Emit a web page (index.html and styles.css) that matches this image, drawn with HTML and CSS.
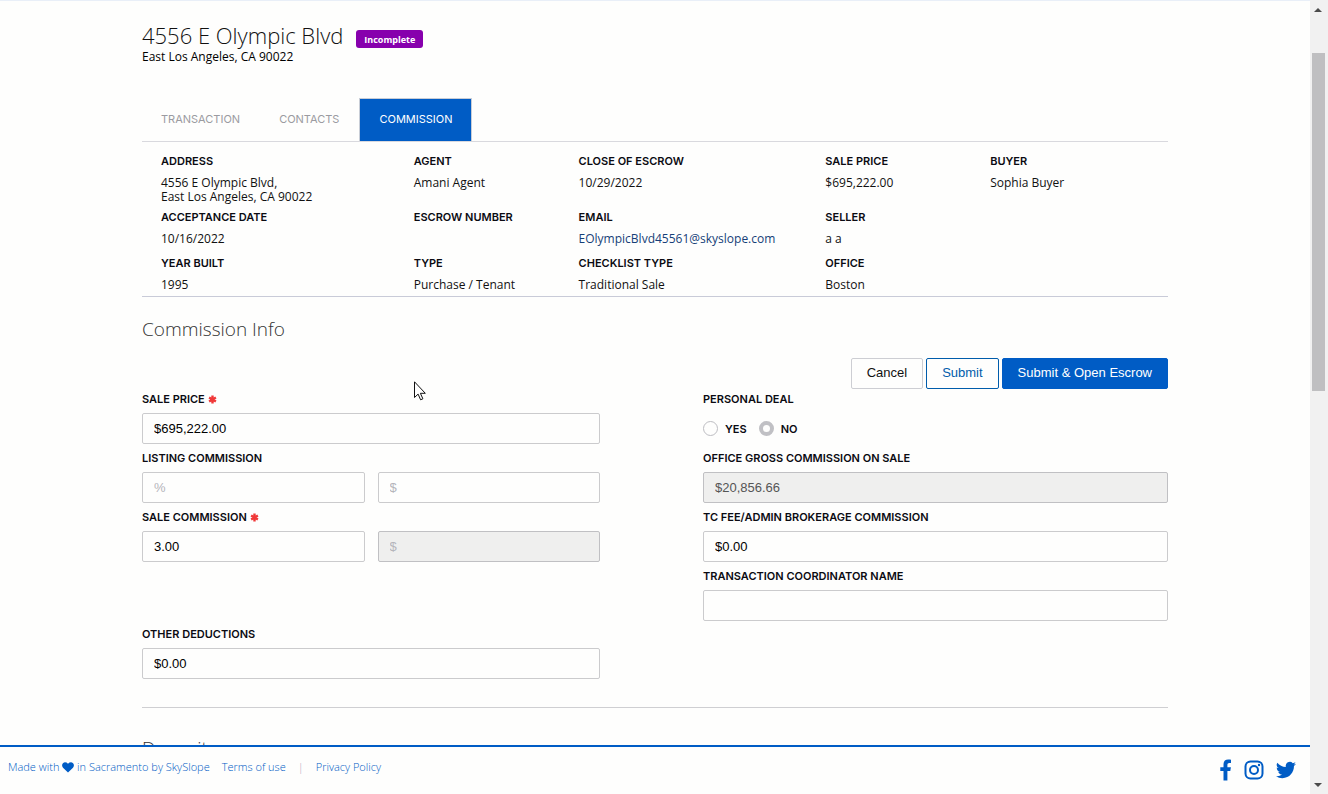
FILE: index.html
```html
<!DOCTYPE html>
<html lang="en">
<head>
<meta charset="utf-8">
<title>4556 E Olympic Blvd - Commission</title>
<link rel="stylesheet" href="styles.css">
</head>
<body>
<div class="app">
  <div class="pane">
    <main class="content">
      <div class="container">
        <header class="property">
          <div class="property-row">
            <h1 class="property-title">4556 E Olympic Blvd</h1>
            <span class="badge">Incomplete</span>
          </div>
          <p class="property-city">East Los Angeles, CA 90022</p>
        </header>
        <nav class="tabs">
          <a class="tab" href="#transaction">TRANSACTION</a>
          <a class="tab" href="#contacts">CONTACTS</a>
          <a class="tab tab-active" href="#commission">COMMISSION</a>
        </nav>
        <dl class="info">
          <div class="info-item"><dt>ADDRESS</dt><dd>4556 E Olympic Blvd,<br>East Los Angeles, CA 90022</dd></div>
          <div class="info-item"><dt>AGENT</dt><dd>Amani Agent</dd></div>
          <div class="info-item"><dt>CLOSE OF ESCROW</dt><dd>10/29/2022</dd></div>
          <div class="info-item"><dt>SALE PRICE</dt><dd>$695,222.00</dd></div>
          <div class="info-item"><dt>BUYER</dt><dd>Sophia Buyer</dd></div>
          <div class="info-item info-first"><dt>ACCEPTANCE DATE</dt><dd>10/16/2022</dd></div>
          <div class="info-item"><dt>ESCROW NUMBER</dt><dd></dd></div>
          <div class="info-item"><dt>EMAIL</dt><dd><a class="email" href="mailto:EOlympicBlvd45561@skyslope.com">EOlympicBlvd45561@skyslope.com</a></dd></div>
          <div class="info-item"><dt>SELLER</dt><dd>a a</dd></div>
          <div class="info-item info-first"><dt>YEAR BUILT</dt><dd>1995</dd></div>
          <div class="info-item"><dt>TYPE</dt><dd>Purchase / Tenant</dd></div>
          <div class="info-item"><dt>CHECKLIST TYPE</dt><dd>Traditional Sale</dd></div>
          <div class="info-item"><dt>OFFICE</dt><dd>Boston</dd></div>
        </dl>
        <h2 class="section-title">Commission Info</h2>
        <form>
          <div class="actions">
            <button class="btn" type="button">Cancel</button>
            <button class="btn btn-outline" type="button">Submit</button>
            <button class="btn btn-primary" type="submit">Submit &amp; Open Escrow</button>
          </div>
          <div class="columns">
            <div class="column">
              <div class="field">
                <label class="label" for="price">SALE PRICE <svg class="required" viewBox="0 0 9 9" aria-hidden="true"><path d="M4.500 0.600v7.800M1.100 2.500l6.800 4M7.900 2.500l-6.800 4"/></svg></label>
                <input class="input" id="price" type="text" value="$695,222.00">
              </div>
              <div class="field">
                <label class="label" for="listing">LISTING COMMISSION</label>
                <div class="pair">
                  <input class="input" id="listing" type="text" placeholder="%">
                  <input class="input" type="text" placeholder="$" aria-label="Listing commission amount">
                </div>
              </div>
              <div class="field">
                <label class="label" for="sale">SALE COMMISSION <svg class="required" viewBox="0 0 9 9" aria-hidden="true"><path d="M4.500 0.600v7.800M1.100 2.500l6.800 4M7.900 2.500l-6.800 4"/></svg></label>
                <div class="pair">
                  <input class="input" id="sale" type="text" value="3.00">
                  <input class="input" type="text" placeholder="$" aria-label="Sale commission amount" disabled>
                </div>
              </div>
              <div class="field field-last">
                <label class="label" for="deductions">OTHER DEDUCTIONS</label>
                <input class="input" id="deductions" type="text" value="$0.00">
              </div>
            </div>
            <div class="column">
              <fieldset class="field">
                <legend class="label">PERSONAL DEAL</legend>
                <div class="radios">
                  <label class="radio"><input type="radio" name="personal">YES</label>
                  <label class="radio"><input type="radio" name="personal" checked>NO</label>
                </div>
              </fieldset>
              <div class="field">
                <label class="label" for="gross">OFFICE GROSS COMMISSION ON SALE</label>
                <input class="input" id="gross" type="text" value="$20,856.66" disabled>
              </div>
              <div class="field">
                <label class="label" for="fee">TC FEE/ADMIN BROKERAGE COMMISSION</label>
                <input class="input" id="fee" type="text" value="$0.00">
              </div>
              <div class="field">
                <label class="label" for="coordinator">TRANSACTION COORDINATOR NAME</label>
                <input class="input" id="coordinator" type="text">
              </div>
            </div>
          </div>
        </form>
        <hr class="rule">
        <h2 class="section-title">Deposit</h2>
      </div>
    </main>
    <footer class="footer">
      <div class="footer-links">
        <span class="made">Made with <svg class="heart" viewBox="0 0 12 11" aria-label="love"><path d="M6 10.600L1 5.700C-.3 4.300-.2 2 1.200.9 2.600-.1 4.500.2 6 1.800 7.500.2 9.400-.1 10.800.9c1.400 1.100 1.500 3.400.2 4.800z"/></svg> in Sacramento by SkySlope</span>
        <a href="#terms">Terms of use</a>
        <span class="bar">|</span>
        <a href="#privacy">Privacy Policy</a>
      </div>
      <div class="social">
        <a href="#facebook" aria-label="Facebook"><svg width="12" height="22" viewBox="0 0 12 22"><path fill="currentColor" d="M3.500 21.500V12H.3V8.300h3.200V5.500C3.500 2.300 5.300.6 8.200.6c1.400 0 2.800.2 2.800.2V4H9.400C7.900 4 7.400 4.900 7.400 5.900v2.400h3.500l-.6 3.700H7.400v9.500z"/></svg></a>
        <a href="#instagram" aria-label="Instagram"><svg width="20" height="20" viewBox="0 0 20 20" fill="none" stroke="currentColor" stroke-width="2"><rect x="1.500" y="1.500" width="17" height="17" rx="5"/><circle cx="10" cy="10" r="4"/><circle cx="15" cy="5" r="1.200" fill="currentColor" stroke="none"/></svg></a>
        <a href="#twitter" aria-label="Twitter"><svg width="20" height="20" viewBox="0 0 24 24"><path fill="currentColor" d="M23.950 4.570a10 10 0 0 1-2.820.77 4.960 4.960 0 0 0 2.160-2.720c-.95.550-2 .950-3.130 1.180a4.920 4.920 0 0 0-8.380 4.480C7.690 8.090 4.070 6.130 1.640 3.160a4.920 4.920 0 0 0 1.520 6.570 4.900 4.900 0 0 1-2.230-.61v.06a4.920 4.920 0 0 0 3.950 4.830 4.900 4.900 0 0 1-2.210.080 4.940 4.940 0 0 0 4.600 3.420A9.870 9.870 0 0 1 0 19.540a13.990 13.990 0 0 0 7.550 2.210c9.050 0 14-7.500 14-13.980 0-.21 0-.42-.020-.63a9.940 9.940 0 0 0 2.460-2.550z"/></svg></a>
      </div>
    </footer>
  </div>
  <div class="scrollbar" aria-hidden="true">
    <svg class="arrow" viewBox="0 0 8 4"><path d="M0 4l4-4 4 4z"/></svg>
    <div class="track"><div class="thumb"></div></div>
    <svg class="arrow" viewBox="0 0 8 4"><path d="M0 0l4 4 4-4z"/></svg>
  </div>
</div>
<svg class="pointer" viewBox="0 0 12 20" aria-hidden="true"><path d="M.5.8v15.700l3.600-3.400 2.500 5.700 2.300-1-2.500-5.500h4.900z"/></svg>
</body>
</html>
```
FILE: styles.css
```css
* {
  box-sizing: border-box;
}

body {
  margin: 0;
  background: #fefefd;
  color: #111;
  font-family: "Open Sans", "Noto Sans", sans-serif;
  font-size: 12px;
  line-height: 14px;
}

h1, h2, p, dl, dd {
  margin: 0;
}

a {
  color: inherit;
  text-decoration: none;
}

.app {
  display: flex;
  height: 100vh;
  overflow: hidden;
}

.pane {
  flex: 1;
  min-width: 0;
  display: flex;
  flex-direction: column;
}

.content {
  flex: 1;
  min-height: 0;
  overflow: hidden;
  border-top: 1px solid #e9eff8;
}

.container {
  max-width: 1026px;
  margin: 0 auto;
}

.property {
  padding-top: 21px;
}

.property-row {
  display: flex;
  align-items: center;
  gap: 13px;
}

.property-title {
  font-size: 22px;
  font-weight: 300;
  line-height: 26px;
}

.badge {
  margin-top: 8px;
  padding: 3px 8px 1px;
  border-radius: 3px;
  background: #8700ad;
  color: #fff;
  font-size: 9px;
  font-weight: 700;
}

.property-city {
  margin-top: 2px;
  color: #000;
}

.tabs {
  display: flex;
  gap: 1px;
  margin-top: 34px;
  border-bottom: 1px solid #d9d9de;
}

.tab {
  padding: 14px 19px 15px;
  color: #9b9ba1;
  font-family: Inter, sans-serif;
  font-size: 11px;
}

.tab-active {
  padding: 13px 19px 15px;
  border: 1px solid #c8cdd6;
  border-bottom: 0;
  background: #005cc5;
  color: #fff;
}

.info {
  display: grid;
  grid-template-columns: 253fr 165fr 247fr 165fr 178fr;
  row-gap: 6px;
  padding: 12px 0 0 19px;
  border-bottom: 1px solid #c9cbd8;
}

.info-item {
  min-width: 0;
}

.info-first {
  grid-column-start: 1;
}

.info dt,
.label,
.radio {
  color: #0b0b12;
  font-family: Inter, sans-serif;
  font-size: 11px;
  font-weight: 600;
  line-height: 14px;
}

.info dd {
  min-height: 18px;
  margin-top: 8px;
}

.email {
  color: #163f78;
}

.section-title {
  margin-top: 19px;
  color: #333;
  font-size: 19px;
  font-weight: 300;
  line-height: 26px;
}

.actions {
  display: flex;
  justify-content: flex-end;
  gap: 3px;
  margin-top: 16px;
}

.btn {
  height: 31px;
  padding: 0 15px 2px;
  border: 1px solid #cdced3;
  border-radius: 2px;
  background: #fefefd;
  color: #111;
  font: 13px "Liberation Sans", Arial, sans-serif;
}

.btn-outline {
  border-color: #005cab;
  color: #005cab;
}

.btn-primary {
  border-color: #005cc5;
  background: #005cc5;
  color: #fff;
}

.columns {
  display: grid;
  grid-template-columns: 458fr 465fr;
  column-gap: 103px;
  margin-top: 3px;
}

.column {
  min-width: 0;
}

.field {
  min-width: 0;
  margin: 0 0 7px;
  padding: 0;
  border: 0;
}

.field-last {
  margin: 65px 0 0;
}

.label {
  display: block;
  margin-bottom: 7px;
  padding: 0;
}

.required {
  width: 9px;
  height: 9px;
  vertical-align: -1px;
  fill: none;
  stroke: #f03838;
  stroke-width: 2.4;
}

.pair {
  display: grid;
  grid-template-columns: 1fr 1fr;
  gap: 13px;
}

.input {
  display: block;
  width: 100%;
  height: 31px;
  padding: 0 11px;
  border: 1px solid #cbcbcd;
  border-radius: 2px;
  background: #fefefd;
  color: #000;
  font: 13px "Liberation Sans", Arial, sans-serif;
}

.input::placeholder {
  color: #b5b5bb;
}

.input:disabled {
  border-color: #c0c0c3;
  background: #efefee;
  color: #555;
}

.radios {
  display: flex;
  gap: 12px;
  height: 31px;
  align-items: center;
}

.radio {
  display: flex;
  align-items: center;
  gap: 7px;
}

.radio input {
  appearance: none;
  width: 15px;
  height: 15px;
  margin: 0;
  border: 1px solid #bdbdc2;
  border-radius: 50%;
  background: #fefefd;
}

.radio input:checked {
  border: 4px solid #c0c0c4;
}

.rule {
  height: 1px;
  margin: 28px 0 0;
  border: 0;
  background: #cfcfd2;
}

.rule + .section-title {
  margin-top: 27px;
}

.footer {
  display: flex;
  justify-content: space-between;
  height: 49px;
  padding: 13px 14px 0 8px;
  border-top: 2px solid #005cc5;
  color: #005cc5;
  font-size: 11px;
}

.footer-links {
  display: flex;
  gap: 12px;
  font-weight: 300;
}

.heart {
  width: 12px;
  height: 11px;
  vertical-align: -2px;
  fill: #005cc5;
}

.bar {
  color: #b9a2bd;
}

.social {
  display: flex;
  align-items: center;
  gap: 12px;
  height: 20px;
}

.social svg {
  display: block;
}

.scrollbar {
  display: flex;
  flex-direction: column;
  align-items: center;
  width: 18px;
  padding: 8px 3px 7px 1px;
  background: #f1f1f1;
}

.arrow {
  width: 8px;
  height: 4px;
  fill: #4b4b4b;
}

.track {
  flex: 1;
  width: 13px;
  padding: 41px 0;
}

.thumb {
  height: 49%;
  background: #bfbfc1;
}

.pointer {
  position: absolute;
  top: 381px;
  left: 414px;
  width: 12px;
  height: 20px;
  fill: #fff;
  stroke: #111;
}
```
